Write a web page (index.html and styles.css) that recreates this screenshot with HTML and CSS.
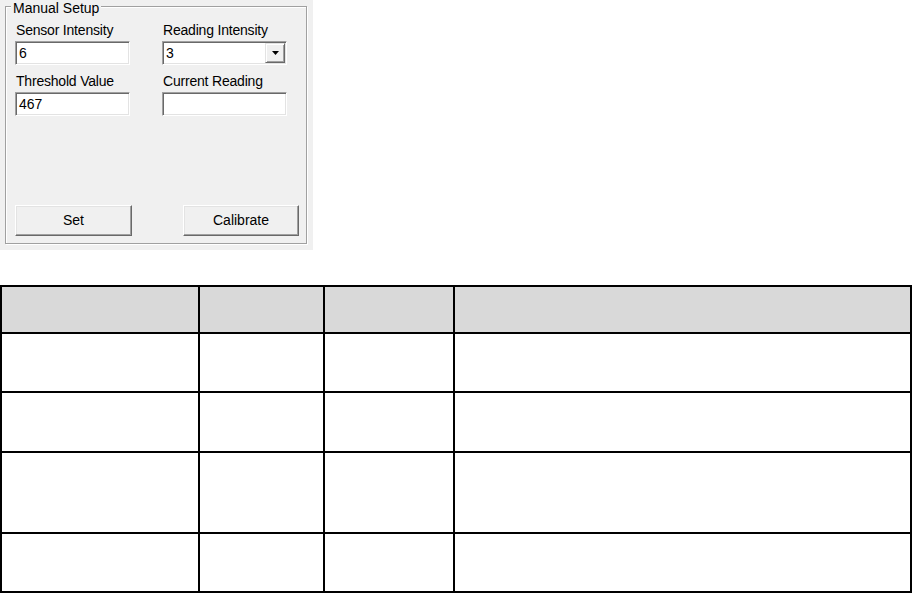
FILE: index.html
```html
<!DOCTYPE html>
<html lang="en">
<head>
<meta charset="utf-8">
<title>Manual Setup</title>
<link rel="stylesheet" href="styles.css">
</head>
<body>
<div class="panel">
  <div class="group">
    <span class="legend">Manual Setup</span>
    <div class="fields">
      <div class="field">
        <span class="label">Sensor Intensity</span>
        <div class="edit">6</div>
      </div>
      <div class="field">
        <span class="label">Reading Intensity</span>
        <div class="combo">
          <span class="combo-val">3</span>
          <span class="drop"><svg width="7" height="4" viewBox="0 0 7 4"><path d="M0 0H7L3.5 4Z" fill="#000"/></svg></span>
        </div>
      </div>
      <div class="field">
        <span class="label">Threshold Value</span>
        <div class="edit">467</div>
      </div>
      <div class="field">
        <span class="label">Current Reading</span>
        <div class="edit"></div>
      </div>
    </div>
    <div class="buttons">
      <button class="btn btn-set">Set</button>
      <button class="btn btn-cal">Calibrate</button>
    </div>
  </div>
</div>

<div class="grid-table">
  <div class="cell head"></div><div class="cell head"></div><div class="cell head"></div><div class="cell head"></div>
  <div class="cell"></div><div class="cell"></div><div class="cell"></div><div class="cell"></div>
  <div class="cell"></div><div class="cell"></div><div class="cell"></div><div class="cell"></div>
  <div class="cell"></div><div class="cell"></div><div class="cell"></div><div class="cell"></div>
  <div class="cell"></div><div class="cell"></div><div class="cell"></div><div class="cell"></div>
</div>
</body>
</html>
```
FILE: styles.css
```css
html, body {
  margin: 0;
  padding: 0;
  background: #fff;
}
body {
  width: 912px;
  height: 593px;
  overflow: hidden;
  font-family: "Liberation Sans", Arial, sans-serif;
  font-size: 14px;
  color: #000;
}
.panel {
  width: 313px;
  height: 250px;
  background: #f0f0f0;
  padding: 6px 0 0 5px;
  box-sizing: border-box;
}
.group {
  position: relative;
  width: 302px;
  height: 238px;
  box-sizing: border-box;
  border: 1px solid #a0a0a0;
  box-shadow: 1px 1px 0 #fff, inset 1px 1px 0 #fff;
  display: flex;
  flex-direction: column;
  padding: 15px 0 7px 9px;
}
.legend {
  position: absolute;
  top: -7px;
  left: 5px;
  padding: 0 2px;
  line-height: 16px;
  background: #f0f0f0;
}
.fields {
  display: grid;
  grid-template-columns: 115px 125px;
  column-gap: 32px;
  row-gap: 8px;
}
.field {
  display: flex;
  flex-direction: column;
}
.label {
  line-height: 16px;
  padding-left: 1px;
  margin-bottom: 3px;
  white-space: nowrap;
  letter-spacing: -0.2px;
}
.edit, .combo {
  height: 24px;
  box-sizing: border-box;
  background: #fff;
  border: 1px solid;
  border-color: #a0a0a0 #fff #fff #a0a0a0;
  box-shadow: inset 1px 1px 0 #696969, inset -1px -1px 0 #e3e3e3;
  line-height: 22px;
  padding-left: 3px;
}
.combo {
  display: flex;
  padding: 1px 1px 1px 0;
}
.combo-val {
  flex: 1;
  line-height: 20px;
  padding-left: 3px;
}
.drop {
  width: 20px;
  height: 20px;
  box-sizing: border-box;
  background: #f0f0f0;
  border: 1px solid;
  border-color: #e3e3e3 #696969 #696969 #e3e3e3;
  box-shadow: inset 1px 1px 0 #fff, inset -1px -1px 0 #a0a0a0;
  display: flex;
  align-items: center;
  justify-content: center;
}
.drop svg {
  display: block;
}
.buttons {
  margin-top: auto;
  display: flex;
  gap: 51px;
}
.btn {
  height: 31px;
  box-sizing: border-box;
  padding: 0 0 1px;
  font: inherit;
  color: #000;
  background: #f0f0f0;
  border: 1px solid;
  border-color: #fff #696969 #696969 #fff;
  box-shadow: inset -1px -1px 0 #a0a0a0, inset 1px 1px 0 #e3e3e3;
  border-radius: 0;
}
.btn-set { width: 117px; }
.btn-cal { width: 116px; }

.grid-table {
  margin-top: 35px;
  display: grid;
  grid-template-columns: 196px 123px 128px 455px;
  grid-template-rows: 45px 57px 58px 79px 57px;
  gap: 2px;
  padding: 2px;
  background: #000;
  width: 912px;
  box-sizing: border-box;
}
.cell {
  background: #fff;
}
.cell.head {
  background: #d9d9d9;
}
```
